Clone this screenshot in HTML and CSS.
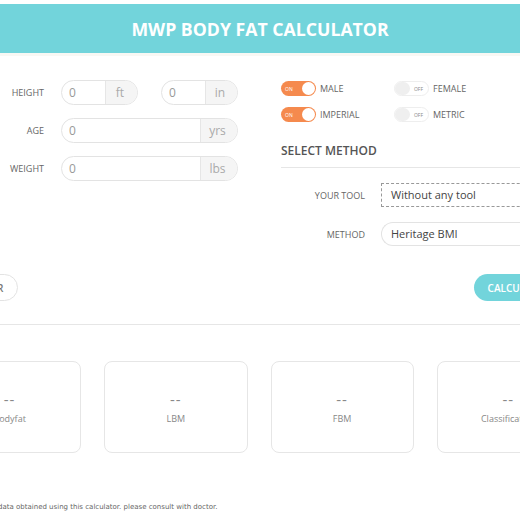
FILE: index.html
```html
<!DOCTYPE html>
<html lang="en">
<head>
    <meta charset="UTF-8">
    <title>MWP Body Fat Calculator</title>
    <link rel="stylesheet" href="styles.css">
</head>
<body>
    <div class="page">
        <div class="header">
            <h1>MWP BODY FAT CALCULATOR</h1>
        </div>

        <div class="form">
            <div class="col-left">
                <div class="row">
                    <label>HEIGHT</label>
                    <div class="inputs">
                        <div class="field"><span class="value">0</span><span class="addon">ft</span></div>
                        <div class="field"><span class="value">0</span><span class="addon">in</span></div>
                    </div>
                </div>
                <div class="row">
                    <label>AGE</label>
                    <div class="inputs">
                        <div class="field"><span class="value">0</span><span class="addon wide">yrs</span></div>
                    </div>
                </div>
                <div class="row">
                    <label>WEIGHT</label>
                    <div class="inputs">
                        <div class="field"><span class="value">0</span><span class="addon wide">lbs</span></div>
                    </div>
                </div>
            </div>

            <div class="col-right">
                <div class="toggles">
                    <div class="toggle-item"><span class="switch on"><span class="txt">ON</span><span class="knob"></span></span>MALE</div>
                    <div class="toggle-item"><span class="switch off"><span class="knob"></span><span class="txt">OFF</span></span>FEMALE</div>
                    <div class="toggle-item"><span class="switch on"><span class="txt">ON</span><span class="knob"></span></span>IMPERIAL</div>
                    <div class="toggle-item"><span class="switch off"><span class="knob"></span><span class="txt">OFF</span></span>METRIC</div>
                </div>
                <h2>SELECT METHOD</h2>
                <div class="method-row">
                    <label>YOUR TOOL</label>
                    <div class="select focused">Without any tool</div>
                </div>
                <div class="method-row">
                    <label>METHOD</label>
                    <div class="select">Heritage BMI</div>
                </div>
            </div>
        </div>

        <div class="actions">
            <button class="btn-clear">CLEAR</button>
            <button class="btn-calc">CALCULATE</button>
        </div>

        <div class="results">
            <div class="result-card"><div class="num">--</div><div class="name">Bodyfat</div></div>
            <div class="result-card"><div class="num">--</div><div class="name">LBM</div></div>
            <div class="result-card"><div class="num">--</div><div class="name">FBM</div></div>
            <div class="result-card"><div class="num">--</div><div class="name">Classification</div></div>
        </div>

        <p class="note">data obtained using this calculator. please consult with doctor.</p>
    </div>
</body>
</html>
```

FILE: styles.css
```css
body {
    margin: 0;
    background: #fff;
    font-family: "Open Sans", sans-serif;
    overflow: hidden;
}
.page {
    width: 700px;
    margin-left: -90px;
    padding-top: 4px;
    background: #fff;
}
.header {
    background: #72d4db;
    height: 49px;
    display: flex;
    align-items: center;
    justify-content: center;
    border-bottom: 3px solid #f8f8f4;
}
.header h1 {
    margin: 0;
    color: #fff;
    font-size: 17.7px;
    font-weight: 700;
}
.form {
    display: flex;
    gap: 43px;
    padding: 24px 30px 0 28px;
}
.col-left {
    width: 300px;
    display: flex;
    flex-direction: column;
    gap: 13px;
}
.row {
    display: flex;
    align-items: center;
    gap: 17px;
    height: 25px;
}
.row label, .method-row label {
    width: 106px;
    text-align: right;
    font-size: 9px;
    color: #666;
}
.inputs {
    width: 177px;
    display: flex;
    gap: 23px;
}
.field {
    flex: 1;
    height: 25px;
    box-sizing: border-box;
    border: 1px solid #e3e3e3;
    border-radius: 13px;
    display: flex;
    overflow: hidden;
}
.value {
    flex: 1;
    padding-left: 7px;
    font-size: 12px;
    line-height: 23px;
    color: #999;
}
.addon {
    width: 28px;
    background: #f5f5f5;
    border-left: 1px solid #e6e6e6;
    text-align: center;
    font-size: 12px;
    line-height: 23px;
    color: #aaa;
    padding-right: 3px;
}
.addon.wide {
    width: 33px;
}
.col-right {
    flex: 1;
    padding-top: 1px;
}
.toggles {
    display: grid;
    grid-template-columns: 113px 1fr;
    row-gap: 11px;
}
.toggle-item {
    display: flex;
    align-items: center;
    gap: 4px;
    height: 15px;
    font-size: 9px;
    color: #666;
}
.switch {
    width: 35px;
    height: 15px;
    box-sizing: border-box;
    border-radius: 8px;
    display: flex;
    align-items: center;
    justify-content: space-between;
    font-size: 5px;
}
.switch.on {
    background: #f58a4e;
    padding: 0 1px 0 4px;
}
.switch.on .txt {
    color: #fff;
}
.switch.on .knob {
    width: 13px;
    height: 13px;
    border-radius: 50%;
    background: #fff;
}
.switch.off {
    background: #fff;
    border: 1px solid #eee;
    padding: 0 5px 0 0;
}
.switch.off .knob {
    width: 15px;
    height: 13px;
    border-radius: 7px;
    background: #efefef;
}
.switch.off .txt {
    color: #888;
}
.col-right h2 {
    margin: 21px 0 0;
    font-size: 12px;
    line-height: 16px;
    font-weight: 600;
    color: #555;
    padding-bottom: 8px;
    border-bottom: 1px solid #e6e6e6;
}
.method-row {
    display: flex;
    align-items: center;
    gap: 16px;
    margin-top: 15px;
    margin-left: -22px;
}
.method-row:first-of-type {
    margin-top: 16px;
}
.select {
    flex: 1;
    height: 24px;
    box-sizing: border-box;
    border: 1px solid #e3e3e3;
    border-right: none;
    border-radius: 12px 0 0 12px;
    padding-left: 9px;
    font-size: 11px;
    line-height: 22px;
    color: #444;
}
.select.focused {
    border: 1px dashed #999;
    border-right: none;
    border-radius: 0;
}
.actions {
    display: flex;
    justify-content: space-between;
    margin-top: 28px;
    padding: 0 53px 23px 48px;
    border-bottom: 1px solid #e6e6e6;
}
.actions button {
    height: 27px;
    border-radius: 14px;
    font-family: "Open Sans", sans-serif;
    font-size: 10px;
    font-weight: 600;
    padding: 0 14px;
    cursor: pointer;
}
.btn-clear {
    background: #fff;
    border: 1px solid #e3e3e3;
    color: #777;
}
.btn-calc {
    background: #72d4db;
    border: none;
    color: #fff;
    padding: 0 12px;
}
.results {
    display: grid;
    grid-template-columns: repeat(4, 1fr);
    gap: 23px;
    padding: 36px 30px 0 28px;
}
.result-card {
    height: 92px;
    box-sizing: border-box;
    border: 1px solid #e6e6e6;
    border-radius: 8px;
    display: flex;
    flex-direction: column;
    align-items: center;
    justify-content: center;
    gap: 6px;
}
.num {
    font-size: 15px;
    letter-spacing: 1px;
    color: #888;
    line-height: 14px;
    padding-top: 3px;
}
.name {
    font-size: 9px;
    color: #888;
}
.note {
    margin: 50px 0 0;
    padding-left: 88px;
    font-family: "DejaVu Sans", Verdana, sans-serif;
    font-size: 7px;
    color: #666;
}
```
